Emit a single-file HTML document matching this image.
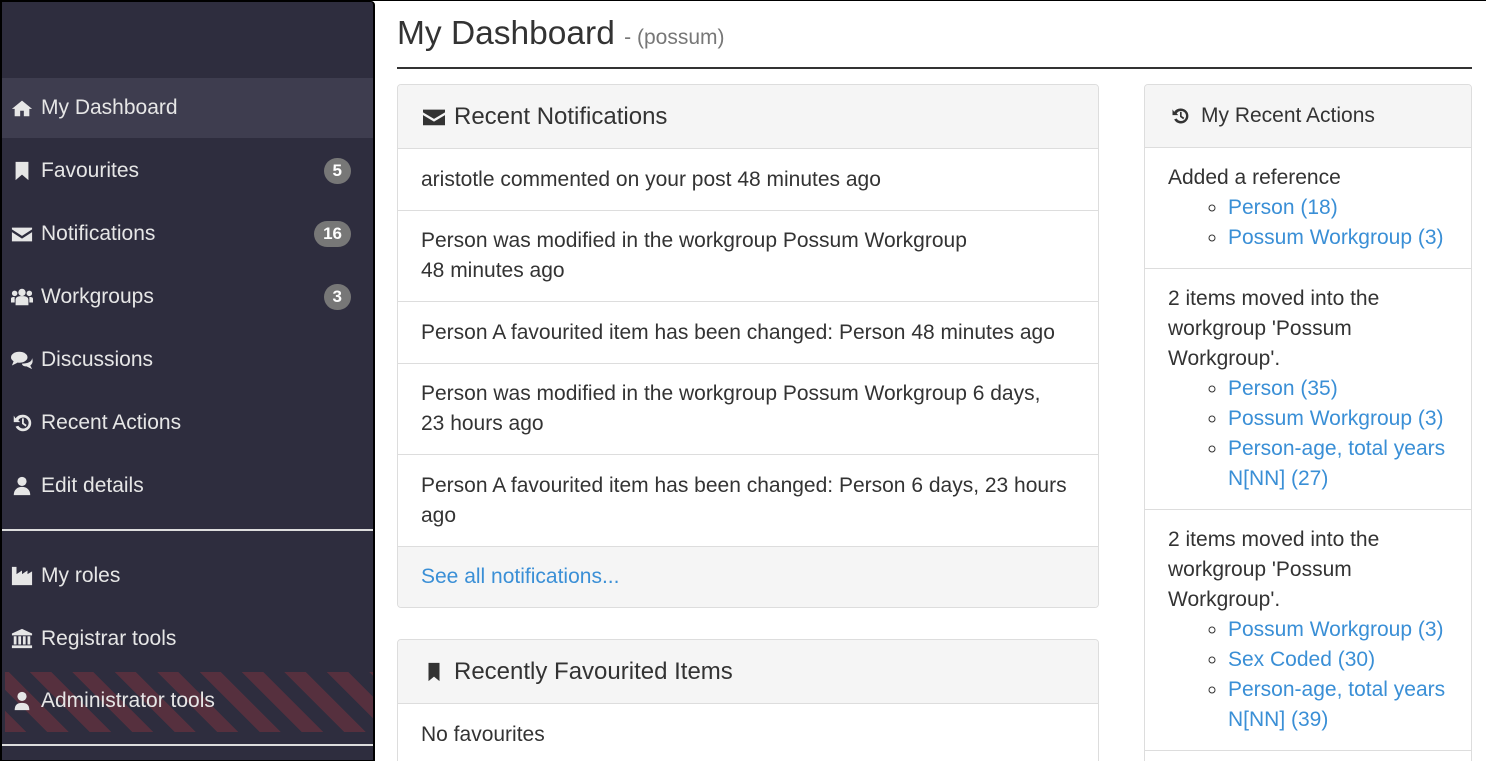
<!DOCTYPE html>
<html style="overflow:hidden;height:761px"><head><meta charset="utf-8"><style>
*{box-sizing:border-box;margin:0;padding:0}
body{width:1486px;height:761px;overflow:hidden;background:#fff;font-family:"Liberation Sans",sans-serif;font-size:21px;color:#333;position:relative;border-top:1px solid #000}
#side{position:absolute;left:0;top:0;width:375px;height:761px;background:#2e2d3e;border:2px solid #000;border-top:1px solid #000;border-radius:0 4px 0 0}
.it{position:absolute;left:0;width:371px;height:60px;color:#e6e6e6;line-height:60px;padding-left:39px}
.it svg{position:absolute;left:9px;top:19px;width:22px;height:22px;fill:#e6e6e6}
.act{background:#3e3d4f}
.badge{position:absolute;right:22px;top:17px;background:#777;color:#fff;font-weight:bold;font-size:17px;line-height:26px;height:26px;padding:0 9px;border-radius:13px}
.div{position:absolute;left:0;width:371px;height:2px;background:#ddd}
.stripe{position:absolute;left:3px;top:670px;width:368px;height:60px;background:repeating-linear-gradient(45deg,#56303e 0 15px,#2e2d3e 15px 30px)}
h1{position:absolute;left:397px;top:14px;font-weight:normal;font-size:33.5px;color:#333}
h1 small{font-size:21px;color:#777}
.hr{position:absolute;left:397px;top:66px;width:1075px;height:2px;background:#333}
.panel{position:absolute;border:1px solid #ddd;border-radius:4px;background:#fff;overflow:hidden}
.ph{background:#f5f5f5;border-bottom:1px solid #ddd;font-size:24px;line-height:63px;padding-left:56px;position:relative}
.ph svg{position:absolute;left:25px;top:22px;width:22px;height:20px;fill:#333}
.row{border-bottom:1px solid #ddd;padding:15.5px 23px 15px;line-height:30px}
.foot{background:#f5f5f5;padding:15.5px 23px 15px;line-height:30px;color:#3a8fd6}
a{color:#3a8fd6;text-decoration:none}
ul{list-style:circle;padding-left:60px}
</style></head><body>
<div id="side">
<div class="it act" style="top:76px"><svg viewBox="0 0 24 24"><path d="M12 4 1 13h3v8h6v-6h4v6h6v-8h3z"/></svg>My Dashboard</div>
<div class="it" style="top:139px"><svg viewBox="0 0 24 24"><path d="M5 2h14v20l-7-6-7 6z"/></svg>Favourites<span class="badge">5</span></div>
<div class="it" style="top:202px"><svg viewBox="0 0 24 24"><path d="M1 5h22v2l-11 7L1 7zM1 10l11 7 11-7v10H1z"/></svg>Notifications<span class="badge">16</span></div>
<div class="it" style="top:265px"><svg viewBox="0 0 24 24"><circle cx="12" cy="7" r="4"/><circle cx="4" cy="8" r="3"/><circle cx="20" cy="8" r="3"/><path d="M5 21v-6c0-3 3-4 7-4s7 1 7 4v6zM0 18v-4c0-2 2-2 4-2v6zM24 18v-4c0-2-2-2-4-2v6z"/></svg>Workgroups<span class="badge">3</span></div>
<div class="it" style="top:328px"><svg viewBox="0 0 24 24"><ellipse cx="9" cy="9" rx="9" ry="6"/><path d="M3 13 1 18l6-3zM12 16c6 0 11-2 11-6 1 3 1 6-2 8l2 4-6-3c-3 0-5-1-5-3z"/></svg>Discussions</div>
<div class="it" style="top:391px"><svg viewBox="0 0 24 24"><path d="M13 3a9 9 0 1 1-8 13l3-1a6 6 0 1 0 0-6l2 2H3V4l2 3a9 9 0 0 1 8-4zm-1 4h2v5l3 2-1 2-4-3z"/></svg>Recent Actions</div>
<div class="it" style="top:454px"><svg viewBox="0 0 24 24"><circle cx="12" cy="7" r="5"/><path d="M3 22c0-6 4-9 9-9s9 3 9 9z"/></svg>Edit details</div>
<div class="div" style="top:527px"></div>
<div class="it" style="top:544px"><svg viewBox="0 0 24 24"><path d="M1 2h5v8l6-4v4l6-4v4l5-3v15H1z"/></svg>My roles</div>
<div class="it" style="top:607px"><svg viewBox="0 0 24 24"><path d="M12 1 1 6v2h22V6zM3 9h3v9H3zM8 9h3v9H8zM13 9h3v9h-3zM18 9h3v9h-3zM1 19h22v3H1z"/></svg>Registrar tools</div>
<div class="stripe"></div>
<div class="it" style="top:669px"><svg viewBox="0 0 24 24"><circle cx="12" cy="7" r="5"/><path d="M4 22c0-6 3-8 8-8s8 2 8 8z"/></svg>Administrator tools</div>
<div class="div" style="top:742px"></div>
</div>

<h1>My Dashboard <small>- (possum)</small></h1>
<div class="hr"></div>

<div class="panel" style="left:397px;top:83px;width:702px">
<div class="ph"><svg viewBox="0 0 24 20"><path d="M0 2h24v3L12 12 0 5zM0 8l12 7 12-7v11H0z"/></svg>Recent Notifications</div>
<div class="row">aristotle commented on your post 48 minutes ago</div>
<div class="row">Person was modified in the workgroup Possum Workgroup<br>48 minutes ago</div>
<div class="row">Person A favourited item has been changed: Person 48 minutes ago</div>
<div class="row">Person was modified in the workgroup Possum Workgroup 6 days,<br>23 hours ago</div>
<div class="row">Person A favourited item has been changed: Person 6 days, 23 hours<br>ago</div>
<div class="foot">See all notifications...</div>
</div>

<div class="panel" style="left:397px;top:638px;width:702px;height:140px">
<div class="ph"><svg viewBox="0 0 24 20"><path d="M6 0h12v20l-6-5-6 5z"/></svg>Recently Favourited Items</div>
<div class="row" style="border:0">No favourites</div>
</div>

<div class="panel" style="left:1144px;top:83px;width:328px;height:700px">
<div class="ph" style="font-size:21px;line-height:62px"><svg viewBox="0 0 24 24" style="top:21px;width:20px"><path d="M13 3a9 9 0 1 1-8 13l3-1a6 6 0 1 0 0-6l2 2H3V4l2 3a9 9 0 0 1 8-4zm-1 4h2v5l3 2-1 2-4-3z"/></svg>My Recent Actions</div>
<div class="row" style="padding:15px 23px 15px">Added a reference<ul><li><a>Person (18)</a></li><li><a>Possum Workgroup (3)</a></li></ul></div>
<div class="row" style="padding:15px 23px 15px">2 items moved into the workgroup 'Possum Workgroup'.<ul><li><a>Person (35)</a></li><li><a>Possum Workgroup (3)</a></li><li><a>Person-age, total years N[NN] (27)</a></li></ul></div>
<div class="row" style="padding:15px 23px 15px">2 items moved into the workgroup 'Possum Workgroup'.<ul><li><a>Possum Workgroup (3)</a></li><li><a>Sex Coded (30)</a></li><li><a>Person-age, total years N[NN] (39)</a></li></ul></div>
</div>
</body></html>
